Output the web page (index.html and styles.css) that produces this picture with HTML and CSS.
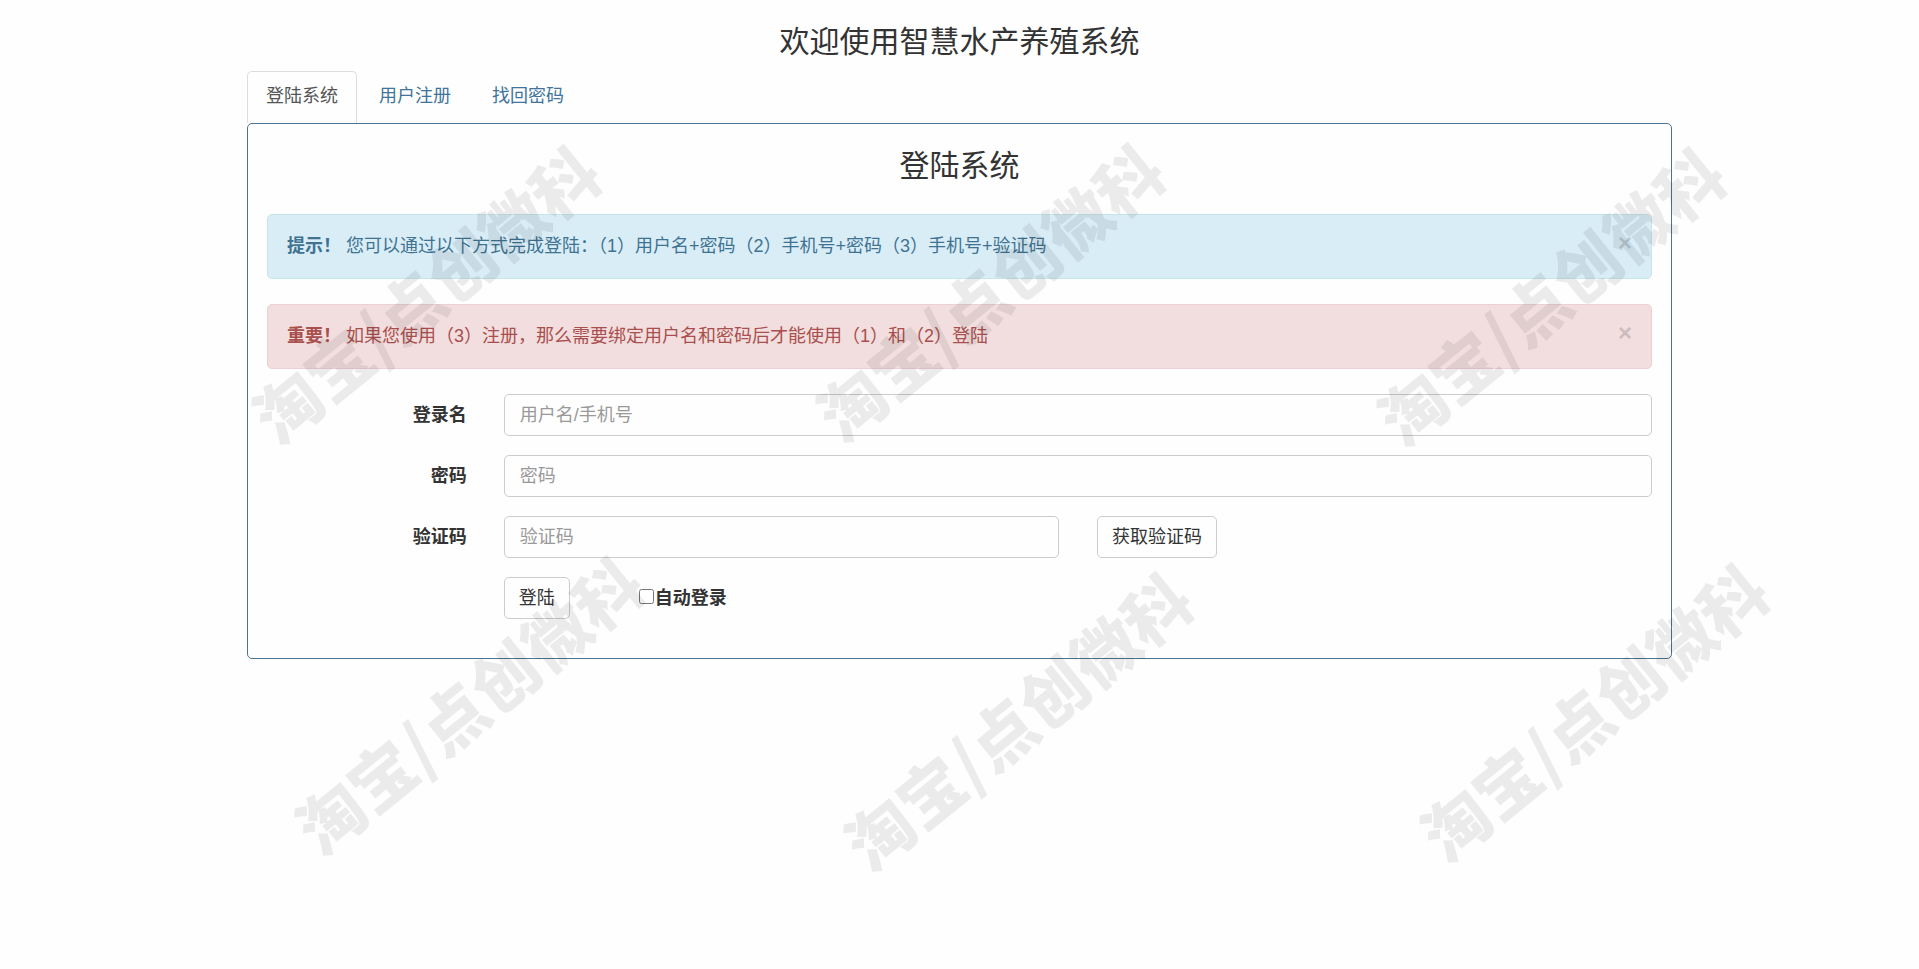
FILE: index.html
```html
<!DOCTYPE html>
<html lang="zh-CN">
<head>
<meta charset="utf-8">
<meta name="viewport" content="width=device-width, initial-scale=1">
<title>智慧水产养殖系统</title>
<link rel="stylesheet" href="styles.css">
</head>
<body>
<main class="container">
  <h1 class="title">欢迎使用智慧水产养殖系统</h1>
  <nav class="tabs">
    <a class="tab tab-active" href="#login" aria-current="page">登陆系统</a>
    <a class="tab" href="#register">用户注册</a>
    <a class="tab" href="#recover">找回密码</a>
  </nav>
  <section class="panel" id="login">
    <h2 class="title">登陆系统</h2>
    <div class="alert alert-info">
      <p class="alert-text"><strong>提示！</strong> 您可以通过以下方式完成登陆：（1）用户名+密码（2）手机号+密码（3）手机号+验证码</p>
      <button class="close" type="button" aria-label="关闭">×</button>
    </div>
    <div class="alert alert-danger">
      <p class="alert-text"><strong>重要！</strong> 如果您使用（3）注册，那么需要绑定用户名和密码后才能使用（1）和（2）登陆</p>
      <button class="close" type="button" aria-label="关闭">×</button>
    </div>
    <form class="form">
      <div class="row">
        <label class="label" for="name">登录名</label>
        <input class="input" id="name" type="text" placeholder="用户名/手机号">
      </div>
      <div class="row">
        <label class="label" for="password">密码</label>
        <input class="input" id="password" type="password" placeholder="密码">
      </div>
      <div class="row">
        <label class="label" for="code">验证码</label>
        <div class="code-group">
          <input class="input" id="code" type="text" placeholder="验证码">
          <button class="button" type="button">获取验证码</button>
        </div>
      </div>
      <div class="row">
        <div class="actions">
          <button class="button" type="submit">登陆</button>
          <label class="remember" for="auto"><input class="checkbox" id="auto" type="checkbox">自动登录</label>
        </div>
      </div>
    </form>
  </section>
</main>
<div class="watermarks" aria-hidden="true">
  <span class="mark mark-1">淘宝/点创微科</span>
  <span class="mark mark-2">淘宝/点创微科</span>
  <span class="mark mark-3">淘宝/点创微科</span>
  <span class="mark mark-4">淘宝/点创微科</span>
  <span class="mark mark-5">淘宝/点创微科</span>
  <span class="mark mark-6">淘宝/点创微科</span>
</div>
</body>
</html>
```
FILE: styles.css
```css
* { box-sizing: border-box; }

body {
  margin: 0;
  background: #fefefe;
  color: #333;
  font-family: "Liberation Sans", "Noto Sans CJK SC", sans-serif;
  font-size: 18px;
  line-height: 25px;
}

.container {
  max-width: 1465px;
  margin: 0 auto;
  padding: 25px 20px 0;
}

.title {
  margin: 0;
  font-size: 30px;
  font-weight: 400;
  line-height: 34px;
  text-align: center;
}

.tabs {
  display: flex;
  gap: 3px;
  margin-top: 12px;
}

.tab {
  padding: 12px 18px 14px;
  border: 1px solid transparent;
  border-bottom: 0;
  border-radius: 5px 5px 0 0;
  color: #40749c;
  text-decoration: none;
}

.tab-active {
  border-color: #ddd;
  color: #555;
}

.panel {
  padding: 25px 19px 39px;
  border: 1px solid #4b7592;
  border-radius: 5px;
}

.alert {
  display: flex;
  justify-content: space-between;
  padding: 19px;
  border: 1px solid;
  border-radius: 5px;
}

.alert-info {
  margin-top: 31px;
  border-color: #c6e4e9;
  background: #d9edf7;
  color: #3f7391;
}

.alert-danger {
  margin-top: 25px;
  border-color: #ebd0d5;
  background: #f2dede;
  color: #a94f4d;
}

.alert-text { margin: 0; }

.close {
  height: 18px;
  margin: 0;
  padding: 0;
  border: 0;
  background: none;
  color: #000;
  font: bold 24px/18px "Liberation Sans", sans-serif;
  opacity: 0.15;
}

.form {
  display: grid;
  gap: 19px;
  margin-top: 25px;
}

.row {
  display: flex;
  justify-content: flex-end;
  align-items: center;
}

.label {
  flex: 1;
  padding-right: 37px;
  font-weight: 700;
  text-align: right;
}

.input,
.button {
  height: 42px;
  border: 1px solid #ccc;
  border-radius: 5px;
  background: #fefefe;
  color: #333;
  font: inherit;
}

.input {
  width: 82.9%;
  min-width: 0;
  padding: 0 15px;
}

.input::placeholder { color: #999; }

.button { padding: 0 14px; }

.code-group {
  display: grid;
  grid-template-columns: 1fr 1fr;
  justify-items: start;
  gap: 38px;
  width: 82.9%;
}

.code-group .input { width: 100%; }

.actions {
  display: flex;
  align-items: center;
  gap: 69px;
  width: 82.9%;
}

.remember {
  display: flex;
  align-items: center;
  gap: 1px;
  font-weight: 700;
}

.checkbox {
  width: 15px;
  height: 15px;
  margin: 0 0 4px;
}

.watermarks {
  position: absolute;
  inset: 0;
  overflow: hidden;
  pointer-events: none;
}

.mark {
  position: absolute;
  color: rgba(0, 0, 0, 0.075);
  font-family: "Noto Sans CJK SC", sans-serif;
  font-size: 66px;
  font-weight: 900;
  line-height: 1;
  white-space: nowrap;
  transform: translate(-50%, -50%) rotate(-39deg);
}

.mark-1 { left: 424px; top: 292px; }
.mark-2 { left: 988px; top: 290px; }
.mark-3 { left: 1549px; top: 294px; }
.mark-4 { left: 467px; top: 703px; }
.mark-5 { left: 1016px; top: 719px; }
.mark-6 { left: 1592px; top: 710px; }
```
